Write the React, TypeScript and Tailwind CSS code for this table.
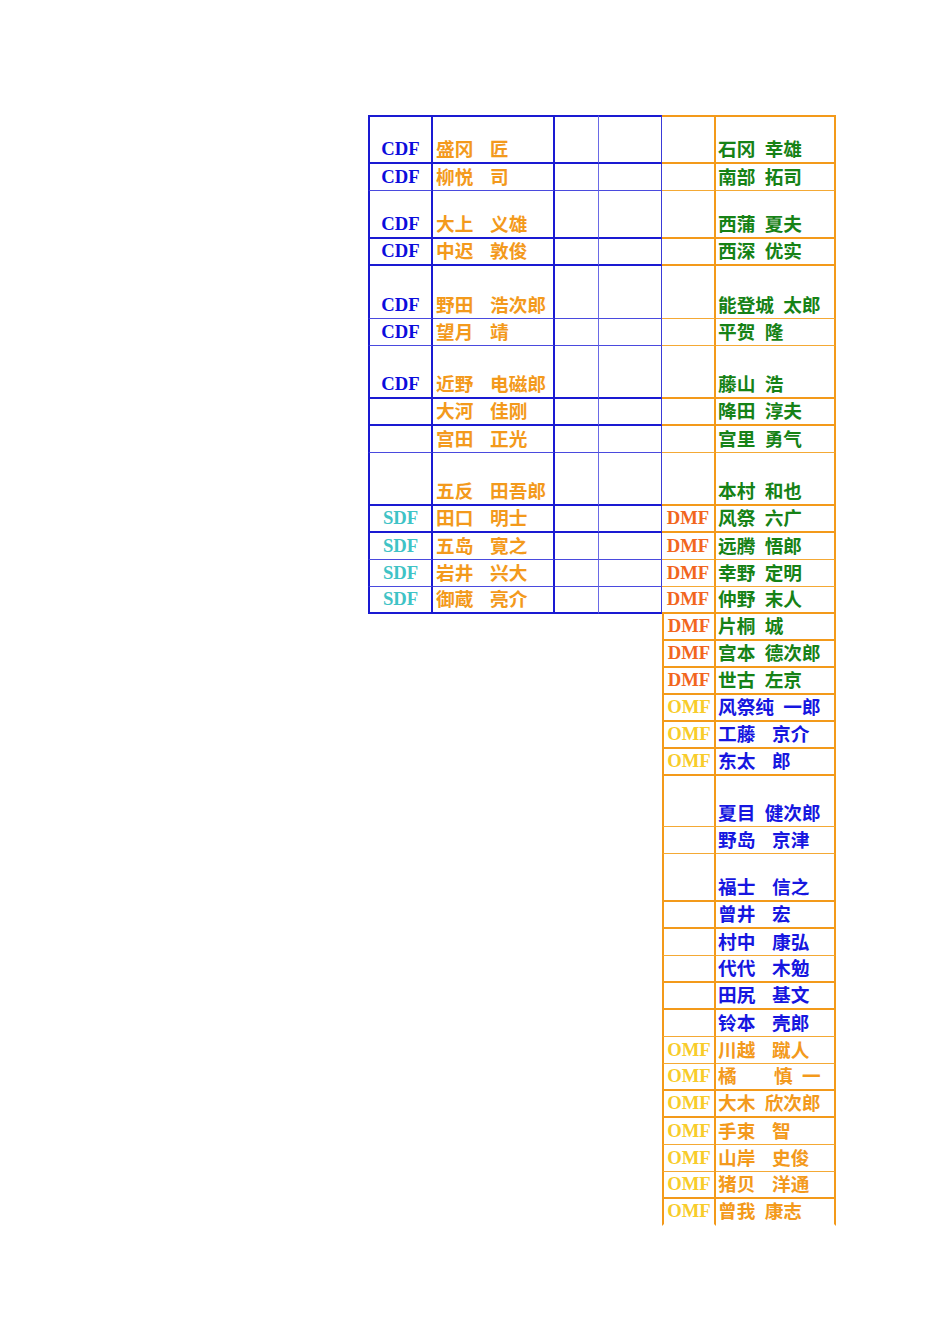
import React from "react";

type Row = {
  h: string;
  b: 0 | 1 | 2;
  l?: string;
  lc?: string;
  n?: string;
  r?: string;
  rlc?: string;
  rn: string;
  rc: string;
};

const CDF = "text-[#0c0cdc]";
const SDF = "text-[#3fc3c6]";
const DMF = "text-[#f2661e]";
const OMF = "text-[#f8cc2a]";
const GREEN = "text-[#168216]";
const BLUE = "text-[#1616e0]";
const ORANGE = "text-[#f39a1c]";

const rows: Row[] = [
  { h: "h-[49px]", b: 2, l: "CDF", lc: CDF, n: "盛冈 _匠", rn: "石冈 幸雄", rc: GREEN },
  { h: "h-[27px]", b: 1, l: "CDF", lc: CDF, n: "柳悦 _司", rn: "南部 拓司", rc: GREEN },
  { h: "h-[48px]", b: 2, l: "CDF", lc: CDF, n: "大上 _义雄", rn: "西蒲 夏夫", rc: GREEN },
  { h: "h-[27px]", b: 2, l: "CDF", lc: CDF, n: "中迟 _敦俊", rn: "西深 优实", rc: GREEN },
  { h: "h-[53px]", b: 1, l: "CDF", lc: CDF, n: "野田 _浩次郎", rn: "能登城 太郎", rc: GREEN },
  { h: "h-[27px]", b: 1, l: "CDF", lc: CDF, n: "望月 _靖", rn: "平贺 隆", rc: GREEN },
  { h: "h-[53px]", b: 2, l: "CDF", lc: CDF, n: "近野 _电磁郎", rn: "藤山 浩", rc: GREEN },
  { h: "h-[27px]", b: 2, n: "大河 _佳刚", rn: "降田 淳夫", rc: GREEN },
  { h: "h-[27px]", b: 1, n: "宫田 _正光", rn: "宫里 勇气", rc: GREEN },
  { h: "h-[53px]", b: 2, n: "五反 _田吾郎", rn: "本村 和也", rc: GREEN },
  { h: "h-[27px]", b: 2, l: "SDF", lc: SDF, n: "田口 _明士", r: "DMF", rlc: DMF, rn: "风祭 六广", rc: GREEN },
  { h: "h-[27px]", b: 1, l: "SDF", lc: SDF, n: "五岛 _寛之", r: "DMF", rlc: DMF, rn: "远腾 悟郎", rc: GREEN },
  { h: "h-[27px]", b: 1, l: "SDF", lc: SDF, n: "岩井 _兴大", r: "DMF", rlc: DMF, rn: "幸野 定明", rc: GREEN },
  { h: "h-[27px]", b: 2, l: "SDF", lc: SDF, n: "御蔵 _亮介", r: "DMF", rlc: DMF, rn: "仲野 末人", rc: GREEN },
  { h: "h-[27px]", b: 2, r: "DMF", rlc: DMF, rn: "片桐 城", rc: GREEN },
  { h: "h-[27px]", b: 2, r: "DMF", rlc: DMF, rn: "宫本 德次郎", rc: GREEN },
  { h: "h-[27px]", b: 2, r: "DMF", rlc: DMF, rn: "世古 左京", rc: GREEN },
  { h: "h-[27px]", b: 2, r: "OMF", rlc: OMF, rn: "风祭纯 一郎", rc: BLUE },
  { h: "h-[27px]", b: 2, r: "OMF", rlc: OMF, rn: "工藤 _京介", rc: BLUE },
  { h: "h-[27px]", b: 2, r: "OMF", rlc: OMF, rn: "东太 _郎", rc: BLUE },
  { h: "h-[51px]", b: 1, rn: "夏目 健次郎", rc: BLUE },
  { h: "h-[27px]", b: 1, rn: "野岛 _京津", rc: BLUE },
  { h: "h-[48px]", b: 2, rn: "福士 _信之", rc: BLUE },
  { h: "h-[27px]", b: 2, rn: "曾井 _宏", rc: BLUE },
  { h: "h-[27px]", b: 1, rn: "村中 _康弘", rc: BLUE },
  { h: "h-[27px]", b: 2, rn: "代代 _木勉", rc: BLUE },
  { h: "h-[27px]", b: 2, rn: "田尻 _基文", rc: BLUE },
  { h: "h-[27px]", b: 1, rn: "铃本 _壳郎", rc: BLUE },
  { h: "h-[27px]", b: 1, r: "OMF", rlc: OMF, rn: "川越 _蹴人", rc: ORANGE },
  { h: "h-[27px]", b: 2, r: "OMF", rlc: OMF, rn: "橘　　慎 一", rc: ORANGE },
  { h: "h-[27px]", b: 2, r: "OMF", rlc: OMF, rn: "大木 欣次郎", rc: ORANGE },
  { h: "h-[27px]", b: 1, r: "OMF", rlc: OMF, rn: "手束 _智", rc: ORANGE },
  { h: "h-[27px]", b: 1, r: "OMF", rlc: OMF, rn: "山岸 _史俊", rc: ORANGE },
  { h: "h-[27px]", b: 2, r: "OMF", rlc: OMF, rn: "猪贝 _洋通", rc: ORANGE },
  { h: "h-[27px]", b: 0, r: "OMF", rlc: OMF, rn: "曾我 康志", rc: ORANGE },
];

const cjk = "font-['Noto_Sans_CJK_SC',sans-serif]";
const serif = "font-['Liberation_Serif','Times_New_Roman',serif]";

// " " = half-em gap, "_" = extra 0.4em gap
function Name({ t, color }: { t: string; color: string }) {
  const tokens = t.split(/( |_)/).filter((s) => s.length > 0);
  return (
    <span className={`${cjk} ${color} font-bold text-[18.67px] leading-[20px] whitespace-pre pb-[4px]`}>
      {tokens.map((p, i) =>
        p === " " ? (
          <span key={i} className="inline-block w-[0.5em]" />
        ) : p === "_" ? (
          <span key={i} className="inline-block w-[0.4em]" />
        ) : (
          <React.Fragment key={i}>{p}</React.Fragment>
        )
      )}
    </span>
  );
}

function Label({ t, color }: { t?: string; color?: string }) {
  if (!t) return null;
  return (
    <span className={`${serif} ${color} font-bold text-[18.67px] leading-[20px] pb-[3px]`}>{t}</span>
  );
}

export default function App() {
  return (
    <div className="min-h-[1344px] w-[950px] bg-white pt-[115px] pl-[368px]">
      <div className="flex flex-col">
        {rows.map((row, i) => {
          const left = i < 14;
          const top = i === 0;
          const lb =
            row.b === 2
              ? "border-b-2 border-b-[#1a1ad2]"
              : "border-b border-b-[#4a4ade]";
          const ob =
            row.b === 2
              ? "border-b-2 border-b-[#f39a1a]"
              : row.b === 1
              ? "border-b border-b-[#f4a935]"
              : "border-b-2 border-b-transparent";
          const lt = top ? "border-t-2 border-t-[#1a1ad2]" : "";
          const ot = top ? "border-t-2 border-t-[#f39a1a]" : "";
          return (
            <div key={i} className={`flex ${row.h}`}>
              {left ? (
                <>
                  <div className={`w-[65px] h-full flex items-end justify-center border-l-2 border-l-[#1a1ad2] border-r-2 border-r-[#1a1ad2] ${lb} ${lt}`}>
                    <Label t={row.l} color={row.lc} />
                  </div>
                  <div className={`w-[122px] h-full flex items-end pl-[3px] border-r-2 border-r-[#1a1ad2] ${lb} ${lt}`}>
                    {row.n && <Name t={row.n} color={ORANGE} />}
                  </div>
                  <div className={`w-[44px] h-full border-r border-r-[#6a6ae6] ${lb} ${lt}`} />
                  <div className={`w-[63px] h-full border-r border-r-[#3a3ad8] ${lb} ${lt}`} />
                  <div className={`w-[54px] h-full flex items-end justify-center border-r-2 border-r-[#f39a1a] ${ob} ${ot}`}>
                    <Label t={row.r} color={row.rlc} />
                  </div>
                </>
              ) : (
                <>
                  <div className="w-[294px] h-full" />
                  <div className={`w-[54px] h-full flex items-end justify-center border-l-2 border-l-[#f39a1a] border-r-2 border-r-[#f39a1a] ${ob}`}>
                    <Label t={row.r} color={row.rlc} />
                  </div>
                </>
              )}
              <div className={`w-[120px] h-full flex items-end pl-[2px] border-r-2 border-r-[#f39a1a] ${ob} ${ot}`}>
                <Name t={row.rn} color={row.rc} />
              </div>
            </div>
          );
        })}
      </div>
    </div>
  );
}
